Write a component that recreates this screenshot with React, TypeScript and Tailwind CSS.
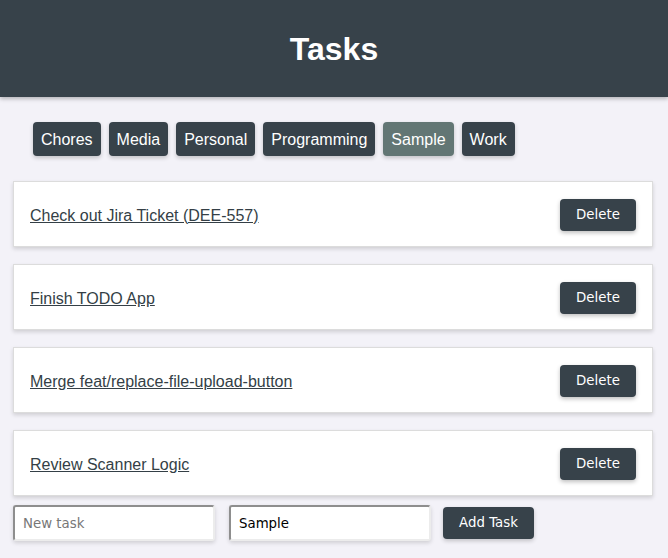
import React from "react";

const tags = ["Chores", "Media", "Personal", "Programming", "Sample", "Work"];
const tasks = [
  "Check out Jira Ticket (DEE-557)",
  "Finish TODO App",
  "Merge feat/replace-file-upload-button",
  "Review Scanner Logic",
];

export default function App() {
  return (
    <div className="min-h-[558px] bg-[#f3f2f8] font-['Liberation_Sans',Arial,sans-serif]">
      <header className="h-[97px] bg-[#37424a] flex items-center justify-center shadow-[0_2px_4px_rgba(0,0,0,0.25)]">
        <h1 className="text-white font-bold text-[32px] leading-none">Tasks</h1>
      </header>
      <div className="flex gap-2 pl-[33px] pt-[25px]">
        {tags.map((t) => (
          <button
            key={t}
            className={`h-[34px] px-2 pt-px rounded text-white text-base shadow-[0_2px_4px_rgba(0,0,0,0.2)] ${
              t === "Sample" ? "bg-[#627674]" : "bg-[#37424a]"
            }`}
          >
            {t}
          </button>
        ))}
      </div>
      <div className="flex flex-col gap-[17px] px-[13px] mt-[25px] w-[666px]">
        {tasks.map((t) => (
          <div
            key={t}
            className="h-[66px] bg-white border border-[#dcdcdc] shadow-[0_2px_4px_rgba(0,0,0,0.15)] flex items-center justify-between pl-4 pr-4"
          >
            <a href="#" className="text-[#343f46] underline text-base mt-[3px]">
              {t}
            </a>
            <button className="w-[76px] h-[32px] mt-px rounded bg-[#37424a] text-white text-[13.33px] font-['DejaVu_Sans',sans-serif] shadow-[0_2px_4px_rgba(0,0,0,0.25)]">
              Delete
            </button>
          </div>
        ))}
      </div>
      <div className="flex items-center px-[13px] mt-[9px] font-['DejaVu_Sans',sans-serif] text-[13.33px]">
        <input
          placeholder="New task"
          className="w-[202px] h-[36px] bg-white rounded-[3px] border-2 border-t-[#8e8e8e] border-l-[#8e8e8e] border-b-[#ececec] border-r-[#ececec] px-2 placeholder:text-[#777] shadow-[0_2px_4px_rgba(0,0,0,0.15)] outline-none"
        />
        <input
          defaultValue="Sample"
          className="ml-[14px] w-[202px] h-[36px] bg-white rounded-[3px] border-2 border-t-[#8e8e8e] border-l-[#8e8e8e] border-b-[#ececec] border-r-[#ececec] px-2 text-black shadow-[0_2px_4px_rgba(0,0,0,0.15)] outline-none"
        />
        <button className="ml-[12px] w-[91px] h-[32px] rounded bg-[#37424a] text-white shadow-[0_2px_4px_rgba(0,0,0,0.2)]">
          Add Task
        </button>
      </div>
    </div>
  );
}
